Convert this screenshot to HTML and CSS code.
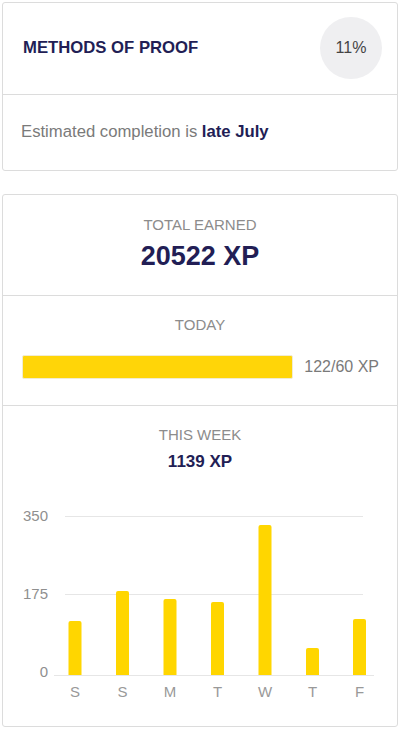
FILE: index.html
```html
<!DOCTYPE html>
<html lang="en">
<head>
    <meta charset="UTF-8">
    <meta name="viewport" content="width=device-width, initial-scale=1.0">
    <title>Progress</title>
    <link rel="stylesheet" href="styles.css">
</head>
<body>
    <div class="card">
        <div class="proof-head">
            <h2 class="course-title">METHODS OF PROOF</h2>
            <div class="pct">11%</div>
        </div>
        <div class="proof-foot">
            Estimated completion is <strong>late July</strong>
        </div>
    </div>

    <div class="card">
        <div class="stat total">
            <div class="stat-label">TOTAL EARNED</div>
            <div class="stat-value big">20522 XP</div>
        </div>
        <div class="stat today">
            <div class="stat-label">TODAY</div>
            <div class="goal-row">
                <div class="goal-bar"></div>
                <span class="goal-text">122/60 XP</span>
            </div>
        </div>
        <div class="stat week">
            <div class="stat-label">THIS WEEK</div>
            <div class="stat-value">1139 XP</div>
            <svg class="chart" width="394" height="230" viewBox="0 0 394 230">
                <!-- grid -->
                <line class="grid" x1="62" y1="36.5" x2="360" y2="36.5"/>
                <line class="grid" x1="62" y1="114.5" x2="360" y2="114.5"/>
                <line class="grid" x1="51" y1="195.5" x2="371" y2="195.5"/>
                <text class="y-tick" x="45" y="41">350</text>
                <text class="y-tick" x="45" y="119">175</text>
                <text class="y-tick" x="45" y="197">0</text>
                <!-- daily bars, 350 xp = 159px -->
                <path class="bar" d="M65.5 195V143a2 2 0 0 1 2-2h9a2 2 0 0 1 2 2V195Z"/>
                <path class="bar" d="M113 195V113a2 2 0 0 1 2-2h9a2 2 0 0 1 2 2V195Z"/>
                <path class="bar" d="M160.5 195V121a2 2 0 0 1 2-2h9a2 2 0 0 1 2 2V195Z"/>
                <path class="bar" d="M208 195V124a2 2 0 0 1 2-2h9a2 2 0 0 1 2 2V195Z"/>
                <path class="bar" d="M255.5 195V47a2 2 0 0 1 2-2h9a2 2 0 0 1 2 2V195Z"/>
                <path class="bar" d="M303 195V170a2 2 0 0 1 2-2h9a2 2 0 0 1 2 2V195Z"/>
                <path class="bar" d="M350 195V141a2 2 0 0 1 2-2h9a2 2 0 0 1 2 2V195Z"/>
                <text class="x-tick" x="72" y="217">S</text>
                <text class="x-tick" x="119.5" y="217">S</text>
                <text class="x-tick" x="167" y="217">M</text>
                <text class="x-tick" x="214.5" y="217">T</text>
                <text class="x-tick" x="262" y="217">W</text>
                <text class="x-tick" x="309.5" y="217">T</text>
                <text class="x-tick" x="356.5" y="217">F</text>
            </svg>
        </div>
    </div>
</body>
</html>
```

FILE: styles.css
```css
body {
    margin: 0;
    padding: 2px 4px 0 2px;
    background: #fff;
    font-family: "Liberation Sans", Arial, sans-serif;
    color: #221e55;
}
.card {
    border: 1px solid #dcdcdc;
    border-radius: 3px;
    background: #fff;
}
.card + .card {
    margin-top: 23px;
}
.proof-head {
    display: flex;
    align-items: center;
    justify-content: space-between;
    padding: 14px 15px 15px 20px;
    border-bottom: 1px solid #dcdcdc;
}
.course-title {
    margin: 0;
    font-size: 16.7px;
    font-weight: 700;
    color: #221e55;
}
.pct {
    width: 62px;
    height: 62px;
    border-radius: 50%;
    background: #efeff1;
    display: flex;
    align-items: center;
    justify-content: center;
    font-size: 16px;
    color: #444;
}
.proof-foot {
    padding: 27px 18px 28px;
    font-size: 16.7px;
    line-height: 20px;
    color: #7a7a7a;
}
.proof-foot strong {
    color: #221e55;
}
.stat {
    text-align: center;
    border-bottom: 1px solid #dcdcdc;
}
.stat:last-child {
    border-bottom: none;
}
.stat-label {
    font-size: 15px;
    line-height: 18px;
    color: #8c8c8c;
}
.stat-value {
    font-size: 17px;
    font-weight: 700;
    line-height: 20px;
    margin-top: 8px;
}
.stat-value.big {
    font-size: 27px;
    line-height: 30px;
    margin-top: 7px;
}
.total {
    padding: 21px 0 24px;
}
.today {
    padding: 20px 0 26px;
}
.goal-row {
    display: flex;
    align-items: center;
    gap: 11px;
    margin-top: 21px;
    padding: 0 18px 0 19px;
}
.goal-bar {
    flex: 1;
    height: 22px;
    background: #ffd508;
    border: 1px solid #f1ecd2;
    border-radius: 2px;
}
.goal-text {
    font-size: 16px;
    color: #7a7a7a;
}
.week {
    padding: 20px 0 16px;
}
.chart {
    display: block;
    margin-top: 8px;
}
.grid {
    stroke: #e6e6e6;
    stroke-width: 1;
}
.bar {
    fill: #ffd600;
}
.y-tick {
    font-family: "Liberation Sans", Arial, sans-serif;
    font-size: 15px;
    fill: #8f8f8f;
    text-anchor: end;
}
.x-tick {
    font-family: "Liberation Sans", Arial, sans-serif;
    font-size: 15px;
    fill: #999;
    text-anchor: middle;
}
```
